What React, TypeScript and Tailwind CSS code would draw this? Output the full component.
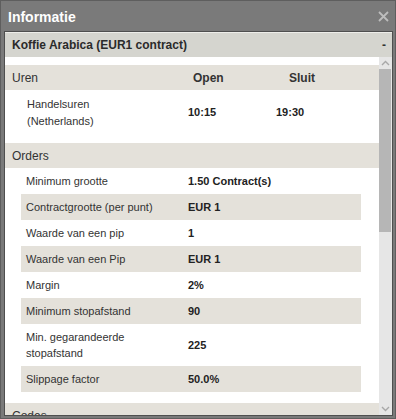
import React from 'react';

const rows: { label: React.ReactNode; value: string; tall?: boolean }[] = [
  { label: 'Minimum grootte', value: '1.50 Contract(s)' },
  { label: 'Contractgrootte (per punt)', value: 'EUR 1' },
  { label: 'Waarde van een pip', value: '1' },
  { label: 'Waarde van een Pip', value: 'EUR 1' },
  { label: 'Margin', value: '2%' },
  { label: 'Minimum stopafstand', value: '90' },
  {
    label: (
      <>
        Min. gegarandeerde
        <br />
        stopafstand
      </>
    ),
    value: '225',
    tall: true,
  },
  { label: 'Slippage factor', value: '50.0%' },
];

const Chevron: React.FC<{ up?: boolean }> = ({ up }) => (
  <svg width="9" height="6" viewBox="0 0 9 6" className="block">
    <path
      d={up ? 'M1 5 L4.5 1.5 L8 5' : 'M1 1 L4.5 4.5 L8 1'}
      fill="none"
      stroke="#a8a8a8"
      strokeWidth="1.4"
    />
  </svg>
);

export default function App() {
  return (
    <div
      className="w-[396px] h-[419px] bg-[#7a7a7a] border border-[#5e5e5e] flex flex-col pl-[3px] pr-[2px] pb-[2px] text-[#333]"
      style={{ fontFamily: '"Liberation Sans", Arial, sans-serif' }}
    >
      <div className="h-[30px] flex items-center justify-between pl-[4px] pr-[4px] shrink-0">
        <span className="text-white font-bold text-[14px] leading-none pt-[2px]">Informatie</span>
        <svg width="11" height="11" viewBox="0 0 11 11" className="mt-[1px]">
          <path d="M1 1 L10 10 M10 1 L1 10" stroke="#bdbdbd" strokeWidth="1.8" />
        </svg>
      </div>
      <div className="flex-1 border border-[#4f4f4f] bg-white flex flex-col overflow-hidden">
        <div className="h-[25px] shrink-0 bg-[#d5d5cf] border-t border-[#eeeeea] flex items-center justify-between pl-[7px] pr-[6px]">
          <span className="font-bold text-[12px] text-[#2b2b2b]">Koffie Arabica (EUR1 contract)</span>
          <span className="text-[12px] font-bold text-[#333] leading-none">-</span>
        </div>
        <div className="flex-1 flex min-h-0">
          <div className="flex-1 overflow-hidden pt-[8px]">
            <div className="h-[25px] bg-[#e4e1da] flex items-center text-[12px]">
              <span className="w-[188px] pl-[7px]">Uren</span>
              <span className="w-[96px] font-bold">Open</span>
              <span className="font-bold">Sluit</span>
            </div>
            <div className="h-[53px] flex items-center text-[11px] pb-[8px]">
              <span className="w-[183px] pl-[22px] leading-[17px]">
                Handelsuren
                <br />
                (Netherlands)
              </span>
              <span className="w-[88px] font-bold text-[#222]">10:15</span>
              <span className="font-bold text-[#222]">19:30</span>
            </div>
            <div className="h-[25px] bg-[#e4e1da] flex items-center text-[12px] pl-[7px]">Orders</div>
            <div className="pl-[16px] pr-[18px]">
              {rows.map((r, i) => (
                <div
                  key={i}
                  className={`flex items-center text-[11px] ${r.tall ? 'h-[42px] leading-[16px]' : 'h-[26px]'} ${
                    i % 2 === 1 ? 'bg-[#e4e1da]' : ''
                  }`}
                >
                  <span className="w-[167px] pl-[5px]">{r.label}</span>
                  <span className="font-bold text-[#222]">{r.value}</span>
                </div>
              ))}
            </div>
            <div className="h-[11px]" />
            <div className="h-[25px] bg-[#e4e1da] flex items-center text-[12px] pl-[7px]">Codes</div>
          </div>
          <div className="w-[13px] bg-[#e6e6e6] flex flex-col pr-[1px]">
            <div className="h-[12px] flex items-center justify-center">
              <Chevron up />
            </div>
            <div className="h-[163px] bg-[#b6b6b6]" />
            <div className="flex-1" />
            <div className="h-[12px] flex items-center justify-center">
              <Chevron />
            </div>
          </div>
        </div>
      </div>
    </div>
  );
}
